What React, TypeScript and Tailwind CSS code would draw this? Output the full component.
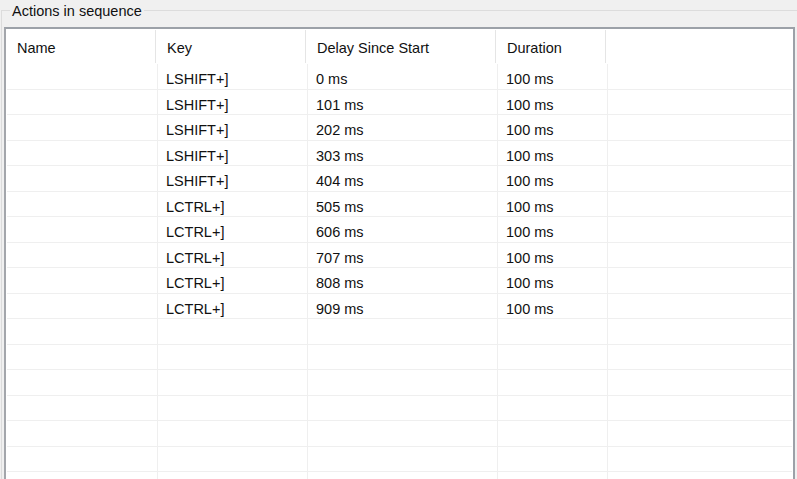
import React from "react";

const data: [string, string][] = [
  ["LSHIFT+]", "0 ms"],
  ["LSHIFT+]", "101 ms"],
  ["LSHIFT+]", "202 ms"],
  ["LSHIFT+]", "303 ms"],
  ["LSHIFT+]", "404 ms"],
  ["LCTRL+]", "505 ms"],
  ["LCTRL+]", "606 ms"],
  ["LCTRL+]", "707 ms"],
  ["LCTRL+]", "808 ms"],
  ["LCTRL+]", "909 ms"],
];

const rows: [string, string, string][] = [
  ...data.map(([k, d]) => [k, d, "100 ms"] as [string, string, string]),
  ...Array.from({ length: 7 }, () => ["", "", ""] as [string, string, string]),
];

export default function App() {
  return (
    <div
      className="w-[797px] h-[479px] overflow-hidden bg-[#f0f0f0] text-[#111] text-[14.5px]"
      style={{ fontFamily: '"Liberation Sans", Arial, sans-serif' }}
    >
      <fieldset className="mt-[1px] ml-[1px] w-[830px] border border-[#dcdcdc] p-0">
        <legend className="ml-[8px] px-[2px] pt-[2px] leading-[16px] text-[#111]">
          Actions in sequence
        </legend>
        <div className="mt-[8px] ml-[2px] w-[791px] h-[520px] border-2 border-[#9ca1a8] border-l-[#a3a6ab] bg-white">
          {/* header */}
          <div className="grid grid-cols-[150px_150px_190px_110px_1fr] h-[35px] bg-white">
            {["Name", "Key", "Delay Since Start", "Duration", ""].map((h, i) => (
              <div
                key={i}
                className={
                  "flex items-center pl-[11px] pt-[4px] my-[1px] " +
                  (i < 4 ? "border-r border-[#e5e5e5]" : "")
                }
              >
                {h}
              </div>
            ))}
          </div>
          {/* rows */}
          {rows.map((r, ri) => (
            <div
              key={ri}
              className="grid grid-cols-[151px_150px_190px_110px_1fr] h-[25.5px] border-b border-[#efefef] mx-[1px]"
            >
              <div className="border-r border-[#efefef]" />
              <div className="flex items-center pl-[8px] pt-[5px] border-r border-[#efefef]">{r[0]}</div>
              <div className="flex items-center pl-[8px] pt-[5px] border-r border-[#efefef]">{r[1]}</div>
              <div className="flex items-center pl-[8px] pt-[5px] border-r border-[#efefef]">{r[2]}</div>
              <div />
            </div>
          ))}
        </div>
      </fieldset>
    </div>
  );
}
